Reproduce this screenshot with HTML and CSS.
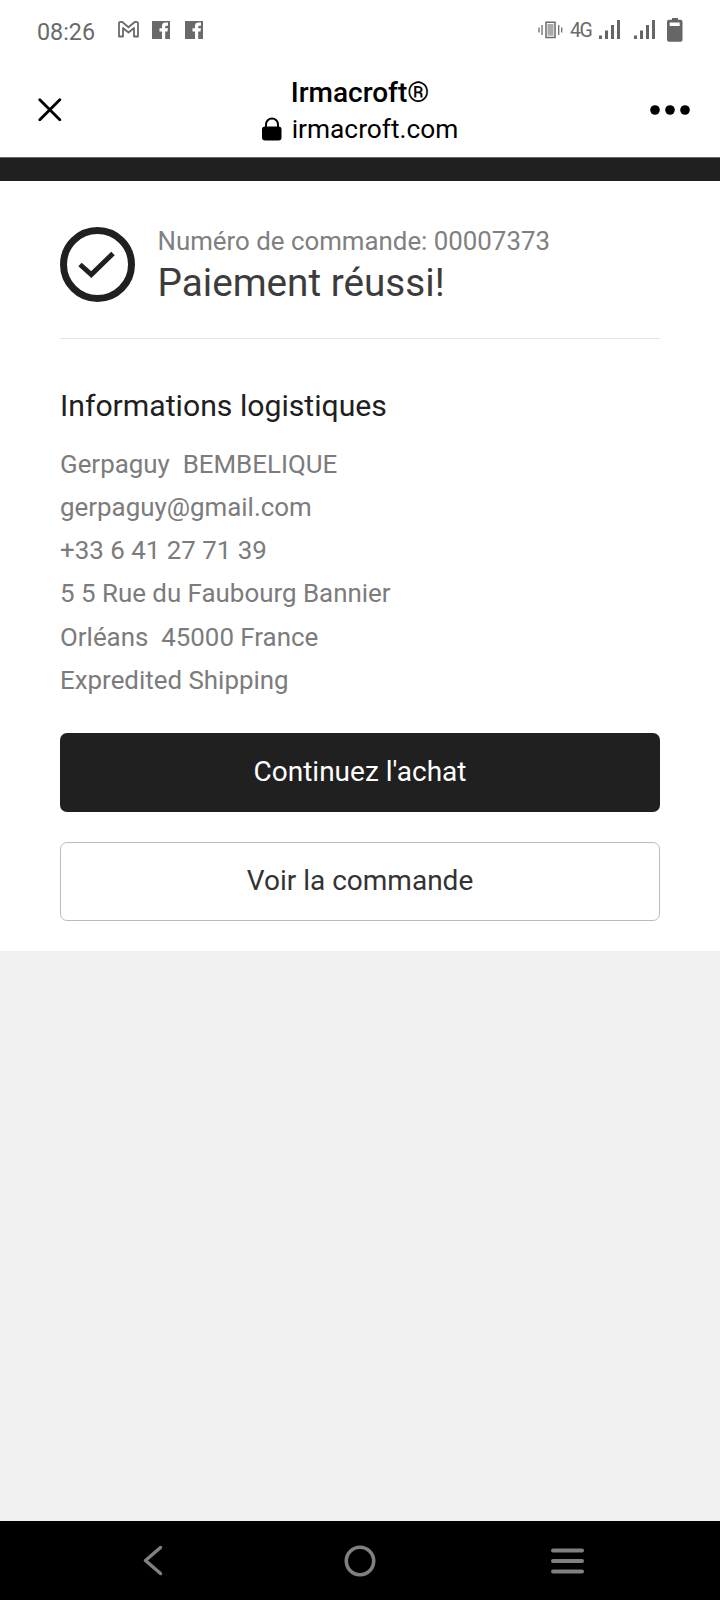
FILE: index.html
```html
<!DOCTYPE html>
<html lang="fr">
<head>
<meta charset="utf-8">
<title>Irmacroft®</title>
<link rel="stylesheet" href="styles.css">
</head>
<body>
<div class="screen">
  <div class="status">
    <span class="time">08:26</span>
    <svg class="notifications" width="90" height="22" viewBox="0 0 90 22">
      <path d="M1 16.500V3.200Q1 1.800 2.600 1.800H4L10.500 7.200 17 1.800H18.400Q20 1.800 20 3.200V16.500H16V8L10.500 12.500 5 8V16.500Z" fill="none" stroke="#6a6a6a" stroke-width="1.800" stroke-linejoin="round"/>
      <g id="fb"><path d="M34 1h18v18H34z" fill="#6a6a6a"/><path d="M44 19V11.500H41.500V8.200H44V6Q44 2.600 47.600 2.600H50V5.700H48.400Q47.200 5.700 47.200 6.900V8.200H50L49.500 11.500H47.200V19Z" fill="#fff"/></g>
      <use href="#fb" x="33"/>
    </svg>
    <span class="spacer"></span>
    <svg class="vibrate" width="25" height="18" viewBox="0 0 25 18">
      <path d="M8 1.300h9v15.200H8z" fill="#fff" stroke="#6a6a6a" stroke-width="1.500"/>
      <path d="M9.500 3h6v11.700h-6z" fill="#aaa"/>
      <path d="M1 6.500v5M4 4v10M20.700 4v10M23.700 6.500v5" stroke="#6a6a6a" stroke-width="1.300"/>
    </svg>
    <span class="network">4G</span>
    <svg class="signals" width="57" height="20" viewBox="0 0 57 20">
      <g id="bars" fill="#666"><path d="M0 15.500h3V19H0zM6 10.500h3V19H6zM12 5h3v14h-3zM18 0h3v19h-3z"/></g>
      <use href="#bars" x="35"/>
    </svg>
    <svg class="battery" width="16" height="24" viewBox="0 0 16 24">
      <path d="M5 0h6v2H5z" fill="#666"/><rect x="0" y="1.800" width="15.500" height="22" rx="2" fill="#666"/><path d="M2.700 4.500h10v3.500h-10z" fill="#fff"/>
    </svg>
  </div>
  <header class="header">
    <svg width="24" height="24" viewBox="0 0 24 24"><path d="M1.800 1.800l20 20M21.800 1.800L1.800 21.800" stroke="#000" stroke-width="2.800" stroke-linecap="round"/></svg>
    <div class="site">
      <div class="site-name">Irmacroft®</div>
      <div class="site-domain">
        <svg width="20" height="24" viewBox="0 0 20 24"><path d="M4 11V7.500a6 6 0 0 1 12 0V11" fill="none" stroke="#000" stroke-width="2"/><rect x="0" y="9.500" width="19.500" height="14" rx="3" fill="#000"/></svg>
        <span>irmacroft.com</span>
      </div>
    </div>
    <svg width="40" height="10" viewBox="0 0 40 10"><circle cx="5" cy="5" r="4.800"/><circle cx="20" cy="5" r="4.800"/><circle cx="35" cy="5" r="4.800"/></svg>
  </header>
  <div class="band"></div>
  <main class="card">
    <section class="result">
      <svg class="check" width="75" height="75" viewBox="0 0 75 75" fill="none" stroke="#202020"><circle cx="37.500" cy="37.500" r="34" stroke-width="7"/><path d="M21 37.500L32.300 47.500 54 26.500" stroke-width="5" transform="translate(-1 0)"/></svg>
      <div>
        <div class="order">Numéro de commande: 00007373</div>
        <h1 class="success">Paiement réussi!</h1>
      </div>
    </section>
    <h2 class="heading">Informations logistiques</h2>
    <div class="details">
      <div>Gerpaguy&nbsp; BEMBELIQUE</div>
      <div>gerpaguy@gmail.com</div>
      <div>+33 6 41 27 71 39</div>
      <div>5 5 Rue du Faubourg Bannier</div>
      <div>Orléans&nbsp; 45000 France</div>
      <div>Expredited Shipping</div>
    </div>
    <button class="button primary">Continuez l'achat</button>
    <button class="button secondary">Voir la commande</button>
  </main>
  <nav class="nav">
    <svg width="20" height="31" viewBox="0 0 20 31"><path d="M17.500 2.500L2.500 15.500 17.500 28.500" fill="none" stroke="#808080" stroke-width="3.500" stroke-linecap="round" stroke-linejoin="round"/></svg>
    <svg width="32" height="32" viewBox="0 0 32 32"><circle cx="16" cy="16" r="13.700" fill="none" stroke="#808080" stroke-width="3.600"/></svg>
    <svg width="33" height="26" viewBox="0 0 33 26"><path d="M2 2.500h29M2 13h29M2 23.500h29" stroke="#808080" stroke-width="4" stroke-linecap="round"/></svg>
  </nav>
</div>
</body>
</html>
```
FILE: styles.css
```css
* { box-sizing: border-box; }
body { margin: 0; font-family: Roboto, "Liberation Sans", sans-serif; background: #f0f0f0; }
svg { display: block; flex: none; }
.screen { width: 720px; height: 1600px; display: flex; flex-direction: column; overflow: hidden; }
.status { height: 60px; flex: none; display: flex; align-items: center; padding: 0 37px 0 37px; background: #fff; color: #6a6a6a; white-space: nowrap; }
.time { font-size: 23.3px; width: 80px; line-height: 28px; margin-top: 4px; }
.notifications { margin: 2px 0 0 1px; }
.spacer { flex: 1; }
.vibrate { margin-right: 7px; }
.network { font-size: 19.5px; width: 29px; letter-spacing: -1.5px; }
.signals { margin-right: 11px; }
.header { height: 97px; flex: none; display: grid; grid-template-columns: 44px 1fr 52px; align-items: center; padding: 2px 30px 0 38px; background: #fff; }
.header > svg:last-child { justify-self: end; }
.site { display: flex; flex-direction: column; align-items: center; color: #000; padding-top: 2px; }
.site-name { font-size: 28px; font-weight: 500; line-height: 36px; letter-spacing: 0; }
.site-domain { display: flex; align-items: center; gap: 10px; font-size: 26.3px; line-height: 36px; }
.band { height: 24px; flex: none; background: #202020; border-top: 1px solid #666; }
.card { height: 770px; flex: none; display: flex; flex-direction: column; padding: 41px 60px 30px; background: #fff; }
.result { height: 117px; display: flex; gap: 22.5px; border-bottom: 1px solid #e4e4e4; white-space: nowrap; }
.check { margin-top: 5px; }
.order { margin-top: 1px; font-size: 25.85px; line-height: 36px; color: #808080; }
.success { margin: 0; font-size: 38.7px; font-weight: 400; line-height: 48px; color: #3c3c3c; }
.heading { margin: 47px 0 17px; font-size: 30.2px; font-weight: 400; line-height: 40px; color: #202020; }
.details { font-size: 25.9px; line-height: 43.2px; color: #7c7c7c; margin-bottom: 31px; }
.button { height: 79px; width: 600px; flex: none; border: 0; border-radius: 7px; font-family: inherit; font-size: 28px; padding: 0 0 3px; }
.primary { background: #202020; color: #fff; margin-bottom: 30px; }
.secondary { background: #fff; color: #333; border: 1px solid #bbb; }
.nav { height: 79px; margin-top: auto; flex: none; display: grid; grid-template-columns: 201px 206.5px 33px; align-items: center; padding-left: 143px; background: #000; }
```
